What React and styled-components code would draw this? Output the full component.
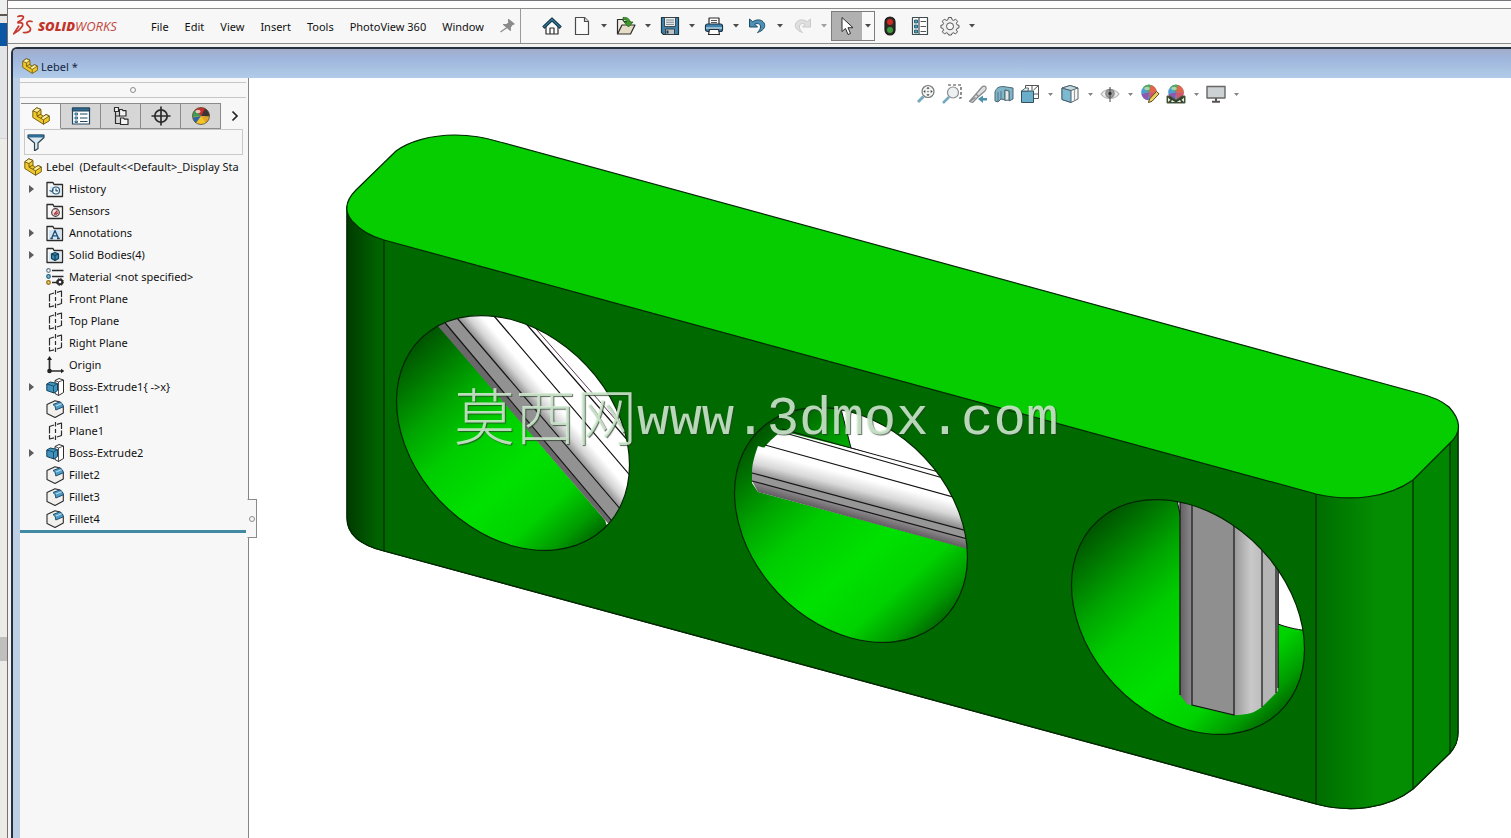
import React from "react";
import styled, { createGlobalStyle } from "styled-components";

const GlobalStyle = createGlobalStyle`
  *, *::before, *::after { box-sizing: border-box; }
  html, body { margin: 0; padding: 0; background: #fff; }
  body, button, input { font-family: "Noto Sans", "Open Sans", sans-serif; font-size: 11px; color: #111; }
  button { border: 0; padding: 0; margin: 0; background: none; }
  svg { display: block; }
`;

/* ---------- frame ---------- */
const Desktop = styled.div`
  display: grid;
  grid-template-columns: 7px minmax(0, 1fr);
  min-height: 100vh;
`;
const Behind = styled.div`
  background: linear-gradient(
    #eef0f0 0 14px, #5c5653 14px 16px, #e6e6e6 16px 23px, #0a56a4 23px 46px,
    #e2e4e6 46px 138px, #d4d4d2 138px 139px, #ebebe7 139px 637px, #bfbfbd 637px 661px, #ebebe7 661px
  );
`;
const AppWindow = styled.div`
  display: flex;
  flex-direction: column;
  min-width: 0;
  border-left: 1px solid #77706e;
  border-top: 1px solid #77757a;
  background: #f3f3f2;
`;
const TitleStrip = styled.div`
  height: 7px;
  background: #fdfdfd;
`;
const MenuBar = styled.header`
  display: flex;
  align-items: center;
  height: 36px;
  border-top: 1px solid #8b8b8b;
  border-bottom: 1px solid #8b8b8b;
  background: #f7f7f7;
`;
const Brand = styled.div`
  display: flex;
  align-items: center;
  gap: 4px;
  width: 127px;
  padding-left: 5px;
`;
const BrandName = styled.span`
  font-family: "Open Sans", sans-serif;
  font-size: 13px;
  font-style: italic;
  line-height: 16px;
  color: #c4463c;
  b { font-weight: 800; color: #c2332a; }
`;
const Menus = styled.nav`
  display: flex;
  align-items: center;
  gap: 16px;
  padding: 2px 0 0 16px;
`;
const MenuButton = styled.button`
  line-height: 20px;
  white-space: nowrap;
`;
const Pin = styled.button`
  display: grid;
  place-items: center;
  width: 37px;
  height: 34px;
  padding-left: 11px;
  border-right: 1px solid #9a9a9a;
`;
const Toolbar = styled.div`
  display: flex;
  align-items: center;
  padding-left: 19px;
`;
const Tool = styled.button`
  display: grid;
  place-items: center;
  width: 24px;
  height: 24px;
  margin-right: ${(p) => (p.$alone ? "6px" : "0")};
  opacity: ${(p) => (p.$dim ? 0.5 : 1)};
`;
const CaretButton = styled.button`
  display: grid;
  place-items: center;
  width: ${(p) => p.$w || 20}px;
  height: ${(p) => p.$h || 20}px;
  opacity: ${(p) => (p.$dim ? 0.5 : 1)};
`;
const SelectGroup = styled.div`
  display: flex;
  height: 30px;
  margin: 0 3px 0 -3px;
  border: 1px solid #7d7d7d;
  background: #f9f9f9;
`;
const SelectTool = styled.button`
  display: grid;
  place-items: center;
  width: 30px;
  background: #b1b1b1;
`;
const DocFrame = styled.section`
  display: flex;
  flex-direction: column;
  flex: 1;
  margin: 3px 0 0 3px;
  border: 2px solid #26303f;
  border-right: 0;
  border-bottom: 0;
  border-top-left-radius: 6px;
  background: #bccfe5;
  overflow: hidden;
`;
const DocTitle = styled.div`
  display: flex;
  align-items: center;
  gap: 3px;
  height: 29px;
  padding: 5px 0 0 9px;
  background: linear-gradient(#a3acc8, #9fb5db 30%, #b0cce9);
  color: #14243f;
`;
const DocBody = styled.div`
  display: grid;
  grid-template-columns: 229px minmax(0, 1fr);
  flex: 1;
  margin-left: 7px;
`;

/* ---------- feature panel ---------- */
const Panel = styled.aside`
  position: relative;
  border-right: 1px solid #858585;
  background: #f7f7f7;
`;
const Grip = styled.div`
  display: grid;
  place-items: center;
  height: 16px;
  margin: 4px 2px 5px 0;
  border-top: 1px solid #c6c6c6;
  border-bottom: 1px solid #c6c6c6;
`;
const Dot = styled.i`
  width: 6px;
  height: 6px;
  border: 1px solid #8c8c8c;
  border-radius: 50%;
`;
const Tabs = styled.div`
  display: flex;
  height: 26px;
  padding-left: 1px;
`;
const Tab = styled.button`
  display: grid;
  place-items: center;
  flex: none;
  width: 40px;
  height: 26px;
  border: 1px solid #8b8b8b;
  border-left-width: 0;
  border-bottom-color: ${(p) => (p.$active ? "#f7f7f7" : "#8b8b8b")};
  background: ${(p) => (p.$active ? "#f9f9f9" : "#d6d6d6")};
`;
const MoreTabs = styled.button`
  display: grid;
  place-items: center;
  flex: 1;
`;
const FilterBox = styled.label`
  display: flex;
  align-items: center;
  height: 26px;
  margin: 0 5px 0 4px;
  padding-left: 2px;
  border: 1px solid #c9c9c9;
`;
const FilterInput = styled.input`
  flex: 1;
  min-width: 0;
  border: 0;
  outline: 0;
  background: transparent;
`;
const Tree = styled.ul`
  list-style: none;
  margin: 1px 2px 0 0;
  padding: 0;
  border-bottom: 3px solid #4289a3;
`;
const TreeRow = styled.li`
  display: flex;
  align-items: center;
  height: 22px;
  padding-left: ${(p) => (p.$root ? 4 : 6)}px;
  line-height: 20px;
  white-space: pre;
  overflow: hidden;
`;
const Expander = styled.span`
  display: block;
  width: 20px;
`;
const NodeIcon = styled.span`
  width: ${(p) => (p.$root ? 22 : 23)}px;
  flex: none;
`;
const PanelHandle = styled.button`
  position: absolute;
  z-index: 2;
  left: 227px;
  top: 421px;
  display: grid;
  place-items: center;
  width: 10px;
  height: 39px;
  border: 1px solid #8b8b8b;
  border-left-color: #f7f7f7;
  background: #f7f7f7;
`;

/* ---------- graphics area ---------- */
const Viewport = styled.main`
  position: relative;
  background: #fff;
  overflow: hidden;
`;
const Scene = styled.svg`
  width: 100%;
  height: auto;
`;
const ViewTools = styled.div`
  position: absolute;
  top: 4px;
  left: 664px;
  display: flex;
  align-items: center;
`;
const ViewTool = styled.button`
  display: grid;
  place-items: center;
  width: 26px;
  height: 24px;
`;
const Watermark = styled.div`
  position: absolute;
  left: 205px;
  top: 296px;
  display: flex;
  align-items: flex-start;
  white-space: nowrap;
  color: rgba(214, 240, 214, 0.85);
  text-shadow: 1px 1px 1px rgba(40, 60, 40, 0.75);
`;
const Hanzi = styled.span`
  font-family: "Noto Sans CJK SC", sans-serif;
  font-size: 61px;
  font-weight: 300;
  line-height: 80px;
`;
const Domain = styled.span`
  font-family: "Liberation Mono", monospace;
  font-size: 54px;
  line-height: 92px;
`;

/* ---------- icons ---------- */
const Svg = ({ w = 20, h, children }) => (
  <svg width={w} height={h || w} viewBox={`0 0 ${w} ${h || w}`} fill="none" stroke="#2c2c2c" strokeWidth="1.2" strokeLinejoin="round" aria-hidden="true">
    {children}
  </svg>
);
const Caret = () => (
  <svg width="6" height="4" viewBox="0 0 6 4" aria-hidden="true"><path d="M0 0h6L3 3.6z" fill="#4b4b4b" /></svg>
);
const CaretSmall = () => (
  <svg width="5" height="3" viewBox="0 0 5 3" aria-hidden="true"><path d="M0 0h5L2.5 3z" fill="#858585" /></svg>
);
const PartIcon = ({ size = 18 }) => (
  <svg width={size} height={size} viewBox="0 0 18 18" stroke="#6b540c" strokeWidth=".9" strokeLinejoin="round" aria-hidden="true">
    <path d="M.8 3.800 4.800.8 9 2.500v5.300l2.500 1.500L14 7.500l3.300 1.500v4.800L11.500 17.300.8 10.500z" fill="#f0c827" />
    <path d="M.8 3.800 4.800.8 9 2.500 5 5.500zM8.500 11.200 14 7.500l3.300 1.500-5.800 3.800z" fill="#fff0a0" />
    <path d="M5 5.500v3.800l3.500 1.900M11.500 12.800v4.500M5 9.300 9 7" fill="none" />
  </svg>
);
const HomeIcon = () => (
  <Svg>
    <path d="M4 9v9h12V9l-6-5z" fill="#fff" />
    <path d="M8 18v-6h4v6" />
    <path d="M1 10.500 10 2l9 8.500-1.500 1.500L10 5l-7.500 7z" fill="#3b86a8" stroke="#173f52" />
  </Svg>
);
const NewIcon = () => (
  <Svg><path d="M3.500 1.500h9l4 4v13h-13z" fill="#fafafa" stroke="#4a4a4a" /><path d="M12.500 1.500v4h4" fill="#ddd" stroke="#4a4a4a" /></Svg>
);
const OpenIcon = () => (
  <Svg>
    <path d="M1.500 18V3.500h5l1.500 2h6V9" fill="#f0ece2" />
    <path d="M1.500 18 6 9h13l-4.500 9z" fill="#e5ddc6" />
    <path d="M7 1.500c4-.5 6.500 1 7 4.500h3l-4.500 5L8 6h3c-.500-1.800-2-2.500-4-2.500z" fill="#3f9a2b" stroke="#24641a" strokeWidth=".8" />
  </Svg>
);
const SaveIcon = () => (
  <Svg>
    <path d="M1.500 1.500h17v17H3.500l-2-2z" fill="#3e83ad" stroke="#1d3644" />
    <path d="M4.500 1.500h11v9h-11z" fill="#e9eef1" strokeWidth=".8" />
    <path d="M6 4h8M6 6.200h8M6 8.400h8" strokeWidth=".8" stroke="#5c6a72" />
    <path d="M5.500 13h9v5.500h-9z" fill="#b8c4ca" strokeWidth=".8" /><path d="M7.500 14.500v3" strokeWidth="2" />
  </Svg>
);
const PrintIcon = () => (
  <Svg>
    <path d="M5 8V2h10v6" fill="#fff" /><path d="M7 4.500h6M7 6.500h6" strokeWidth=".8" />
    <rect x="1.500" y="8" width="17" height="7.500" rx="2" fill="#3e83ad" stroke="#1d3644" />
    <path d="M2 12h16" stroke="#cfe4ef" />
    <path d="M5.500 13.500h9l1 5h-11z" fill="#fff" />
  </Svg>
);
const UndoIcon = () => (
  <Svg><path d="M1.500 3v8h8L6.800 8.300c3.500-2 6.700.2 5.500 4-.3 1.200-1.300 2.700-2.800 4.200 5.500-1.800 8-5 7-8.300-1-4-6.500-6-11.800-2.500z" fill="#4a91b8" stroke="#1f4a62" strokeWidth="1" /></Svg>
);
const RedoIcon = () => (
  <Svg><path d="M18.500 3v8h-8l2.700-2.700c-3.500-2-6.700.2-5.500 4 .3 1.200 1.300 2.700 2.800 4.200-5.500-1.800-8-5-7-8.300 1-4 6.500-6 11.800-2.500z" fill="#c9c9c9" stroke="#9c9c9c" strokeWidth="1" /></Svg>
);
const ArrowIcon = () => (
  <Svg><path d="M5 1.500v14l3.500-3 2.500 6 2.500-1-2.500-5.800h5z" fill="#fff" strokeWidth="1" /></Svg>
);
const TrafficIcon = () => (
  <Svg>
    <rect x="5" y="1" width="10" height="18" rx="5" fill="#2d2a26" stroke="#1c1c1c" />
    <circle cx="10" cy="6" r="3" fill="#cf2a24" stroke="none" /><circle cx="10" cy="14" r="3" fill="#3c9d3c" stroke="none" />
  </Svg>
);
const OptionsIcon = () => (
  <Svg>
    <path d="M2.500 1.500h15v17h-15zM9 1.500v17" fill="#fff" stroke="#3c4c52" />
    <g fill="#4aa0b8" stroke="#1d4f5e" strokeWidth=".8"><path d="M4.500 4h3v3h-3zM4.500 9h3v3h-3zM4.500 14h3v3h-3z" /></g>
    <path d="M10.500 5.500h5.500M10.500 10.500h5.500M10.500 15.500h5.500" stroke="#555" />
  </Svg>
);
const GearIcon = () => (
  <Svg>
    <path d="M8.500 1.500h3l.5 2.200 1.600.7 2-1.200 2 2.100-1.200 2 .7 1.600 1.900.4v2.500l-2 .6-.6 1.500 1.100 2-2 2-2-1.100-1.600.7-.5 1.500h-2.900l-.5-1.500-1.600-.7-2 1.100-2-2 1.100-2-.6-1.500-2-.6V9.300l1.900-.4.700-1.600-1.200-2 2-2.100 2 1.200L8 3.700z" fill="#efefef" stroke="#555" strokeWidth="1" />
    <circle cx="10" cy="10.300" r="3.500" fill="#fafafa" stroke="#555" strokeWidth="1" />
  </Svg>
);
const PinIcon = () => (
  <Svg w={16}><path d="M9.500 1.500 15 6l-2 .8-1.800 2.500.2 3-6.800-5.800 3 .1 2.300-2zM8 9.500 1.500 14" fill="#8b8b8b" stroke="#8b8b8b" /></Svg>
);
const LogoIcon = () => (
  <svg width="21" height="22" viewBox="0 0 21 22" fill="none" stroke="#c7382e" strokeWidth="1.700" strokeLinecap="round" aria-hidden="true">
    <path d="M5 1.500C8 .2 11 .8 10.300 2.800 9.700 4.500 7 6.200 5 7" />
    <path d="M5 7.800C9.500 7 10.800 8.700 8.700 12 7 14.600 4 17 1 18.500c1.700-3 3.200-5 4.700-7.300" />
    <path d="M19 6.500c-3.500-.8-5.500 0-5.200 2 .3 2.200 4.200 3.500 3.700 6-.4 2.200-3.500 3.200-7 3" />
  </svg>
);

const PropertyIcon = () => (
  <Svg>
    <path d="M1.500 2h17v16h-17z" fill="#fff" stroke="#25465c" /><path d="M1.500 2h17v3h-17z" fill="#2f6b92" stroke="#25465c" />
    <g stroke="#285d80" fill="#9ecbe5" strokeWidth=".9"><path d="M4 7h2.500v2H4zM4 11h2.500v2H4zM4 15h2.500v1.500H4z" /></g>
    <path d="M9 8h7.500M9 12h7.500M9 15.500h7.500" stroke="#25465c" />
  </Svg>
);
const ConfigIcon = () => (
  <Svg>
    <path d="M4.500 5v12.500H9M4.500 10H9" />
    <path d="M3.500 1.500h4v4h-4z" fill="#f4f4f4" />
    <path d="M8.500 3.500h2.500l1 1.200h3V10H8.500zM9.500 12h3l1 1.200h3.500v5.300H9.500z" fill="#f4f4f4" />
  </Svg>
);
const TargetIcon = () => (
  <Svg><circle cx="10" cy="10" r="6.200" strokeWidth="1.700" /><path d="M10 0.500v19M.5 10h19" strokeWidth="1.700" /></Svg>
);
const BallIcon = () => (
  <Svg>
    <circle cx="10" cy="10" r="8.500" fill="#f0c525" stroke="none" />
    <path d="M10 10 1.500 11A8.500 8.500 0 0 1 8 1.800z" fill="#3f9b55" stroke="none" />
    <path d="M10 10 4 4a8.500 8.500 0 0 1 12-.1z" fill="#c9302c" stroke="none" />
    <path d="M10 10 14 2.500a8.500 8.500 0 0 1 4.500 8z" fill="#3a3436" stroke="none" />
    <path d="M10 10 18.400 11.500A8.500 8.500 0 0 1 15 17z" fill="#e0a32a" stroke="none" />
    <path d="M10 10 1.600 11.500A8.500 8.500 0 0 0 5 17z" fill="#2c66ad" stroke="none" />
    <circle cx="10" cy="10" r="8.500" stroke="#5a4a3a" strokeWidth=".8" />
    <ellipse cx="7" cy="5.500" rx="2.500" ry="1.800" fill="#fff" opacity=".7" stroke="none" />
  </Svg>
);
const FunnelIcon = () => (
  <Svg w={18}>
    <path d="M1 2h16v2.500L11 10v5.500L7.500 18v-8L1 4.500z" fill="#dce8ef" stroke="#2b4353" />
    <path d="M1.500 2h15v2h-15z" fill="#2f7fae" stroke="#235573" strokeWidth=".8" />
  </Svg>
);

const folderBase = <path d="M1 16.500V2.500h6l1 2h8.500v12z" fill="#f8f8f8" strokeWidth="1.300" />;
const treeIcons = {
  history: (
    <Svg w={18}>{folderBase}<path d="M4 6.500h11v8H4z" fill="#d7e9f5" stroke="none" /><circle cx="10" cy="10.500" r="3.500" stroke="#2b5878" fill="#f4fafd" /><path d="M10 8.500v2.300h2M3.500 10.500l2.500 1 1.500-2" stroke="#2b5878" /></Svg>
  ),
  sensors: (
    <Svg w={18}>{folderBase}<circle cx="9.500" cy="10.500" r="3.800" fill="#f6dede" stroke="#493a3c" /><path d="M8 12.500 11.500 8.500M9.500 12.800l2.500-2" stroke="#a8323a" /></Svg>
  ),
  annotations: (
    <Svg w={18}>{folderBase}<path d="M3 6h12v9H3z" fill="#cfe5f3" stroke="none" /><path d="M5.500 14.500 9 6.500l3.500 8M6.800 11.800h4.400M4.300 14.500h2.600M11 14.500h2.800" stroke="#234e72" strokeWidth="1.300" /></Svg>
  ),
  bodies: (
    <Svg w={18}>{folderBase}<path d="M3 6h12v9H3z" fill="#d7e9f5" stroke="none" /><path d="m5.500 8 3.500-1.500L12.500 8v4.500L9 14.500l-3.500-2z" fill="#3b8ab5" stroke="#143e57" /><path d="M5.500 8 9 9.500 12.500 8M9 9.500v5" stroke="#143e57" /></Svg>
  ),
  material: (
    <Svg w={18}>
      <path d="M6 2.500h11.500M6 8.500h11.500M6 14.500h5" strokeWidth="1.700" />
      <circle cx="2.500" cy="2.500" r="1.800" fill="#fff" stroke="#6a7c88" /><circle cx="2.500" cy="8.500" r="1.800" fill="#7ec2e4" stroke="#275f80" /><circle cx="2.500" cy="14.500" r="1.800" fill="#f2d267" stroke="#8d6b12" />
      <circle cx="14" cy="14" r="2.300" strokeWidth="2" fill="#fff" /><circle cx="14" cy="14" r="3.500" strokeWidth="1" strokeDasharray="1.400 1.350" />
    </Svg>
  ),
  plane: (
    <Svg w={18}><path d="M3.500 11.500V4.500L8 3M11 2.300l4.500-1.300v6M15.500 8.500v5L11 15M8 15.800l-4.500 1.200V13" /><path d="M9.500 0v4.500M9.500 7v4M9.500 13.500V18" /></Svg>
  ),
  origin: (
    <Svg w={18}><path d="M3.500 3v12H16" strokeWidth="1.700" /><path d="M3.500 0 6 4H1zM18.500 15 15 12.800v4.400z" fill="#222" stroke="none" /><circle cx="3.500" cy="15" r="2.300" fill="#222" stroke="none" /></Svg>
  ),
  extrude: (
    <Svg w={18}>
      <path d="m9 2.500 4-2 4.500 1.500v12.500l-5 3-3.500-2z" fill="#fff" strokeWidth="1" /><path d="m9 2.500 3.500 1.500v13.500M12.500 4l5-2" strokeWidth=".8" />
      <path d="m.8 6 3.500-2 7.200 1.500v7L8 15l-7.200-2.500z" fill="#3f93bd" stroke="#12415a" strokeWidth="1" /><path d="m.8 6 6.700 2 4-2.500M7.500 8v7" stroke="#12415a" strokeWidth=".8" />
    </Svg>
  ),
  fillet: (
    <Svg w={18}>
      <path d="M1 4.500 9 .8l5 1.200 3.300 4.500V13L9 17.500l-8-4z" fill="#f3f1ee" strokeWidth="1.100" />
      <path d="M7 4.500 13.500 2c2.300.6 3.600 2.300 3.800 4.800L9.800 10C9.600 7.200 8.800 5.500 7 4.500z" fill="#4f9dc8" stroke="#1d4f6c" strokeWidth="1" />
      <path d="m10 6 5.500-2.300" stroke="#b9dbed" />
    </Svg>
  ),
};

/* view toolbar icons */
const ZoomFit = () => (
  <Svg><path d="m7.500 12.500-5.500 5.500" stroke="#75a9bd" strokeWidth="3" /><circle cx="12" cy="7.500" r="6" fill="#f1f3f3" stroke="#74797b" /><path d="m12 2.800 1.500 2h-3zM12 12.200l1.500-2h-3zM7.300 7.500l2-1.500v3zM16.700 7.500l-2-1.500v3z" fill="#444" stroke="none" /><circle cx="12" cy="7.500" r=".8" fill="#666" stroke="none" /></Svg>
);
const ZoomArea = () => (
  <Svg><path d="M6 1h13v13h-4" stroke="#444" strokeDasharray="3 2" /><path d="m7 13-6 6" stroke="#75a9bd" strokeWidth="2.500" /><circle cx="11" cy="8.500" r="5.500" fill="#eef1f2" stroke="#888c8e" /></Svg>
);
const PrevView = () => (
  <Svg>
    <path d="M1.500 17.500 8 10l6-7c1.500-1.500 3.500-1 4 .3.600 1.400.2 2.700-1 3.700l-6.500 5.500-6 6z" fill="#dcdedf" stroke="#868a8c" />
    <path d="m8 10 2.500 2.500M1.500 17.500l6-4" stroke="#868a8c" /><path d="m10 15 5-3.500V14h4v2.500h-4V19z" fill="#4c91ab" stroke="none" />
  </Svg>
);
const SectionIcon = () => (
  <Svg><path d="M1 8c1-4 4-5.500 8-5.500L19 4v11l-4 2V7l-4-1v10l-4-1-3 3-3-1z" fill="#7fb4c9" stroke="#4c6873" strokeWidth="1" /><path d="m11 6 4 1v9l-4 .500z" fill="#e4e8ea" stroke="#4c6873" strokeWidth="1" /><path d="M4 8v9M7 7v8" stroke="#4c6873" strokeWidth=".8" /></Svg>
);
const OrientIcon = () => (
  <Svg><path d="M5.500 5.500V1.500h13v13H14M13.500 6l5-4.500M12 1.500v5M14 10h4.500" stroke="#555" strokeWidth="1" /><path d="M1.500 7h12v11.500h-12z" fill="#6aaec9" stroke="#35505c" strokeWidth="1" /><path d="m1.500 7 4-3h3L8 7z" fill="#e4eef2" stroke="#35505c" strokeWidth=".8" /></Svg>
);
const CubeIcon = () => (
  <Svg><path d="m2 4 8-2.500L18 4v11l-7 3.500-9-3z" fill="#fbfbfb" stroke="#55646b" strokeWidth="1" /><path d="m2 4 9 2.500v12l-9-3z" fill="#7dbad2" stroke="#44606c" strokeWidth="1" /><path d="m2 4 8-2.500L18 4l-7 2.500z" fill="#c0d9e3" stroke="#55646b" strokeWidth="1" /><path d="M14.500 5.500v11" stroke="#999" /></Svg>
);
const EyeIcon = () => (
  <Svg><path d="M1 10c4-6 14-6 18 0-4 6-14 6-18 0z" fill="#ececec" stroke="#b4b4b4" /><circle cx="10" cy="9.500" r="4.200" fill="#9d9d9d" stroke="#888" /><path d="M10 3v15" stroke="#444" strokeWidth="1" /><circle cx="10" cy="9.500" r="1.700" fill="#333" stroke="none" /></Svg>
);
const Quarters = () => (
  <g stroke="none">
    <circle cx="9" cy="8.500" r="7.800" fill="#4e9fd0" /><path d="M9 8.500 3 3.500A7.800 7.800 0 0 1 12 1.300z" fill="#56a760" />
    <path d="M9 8.500 11 1a7.800 7.800 0 0 1 5.800 8z" fill="#e5654b" /><path d="M9 8.500 1.500 10A7.800 7.800 0 0 0 8 16.200z" fill="#8d58ad" /><path d="m9 8.500 7.800.5a7.800 7.800 0 0 1-7 7.200z" fill="#d8566a" />
    <ellipse cx="7" cy="4.500" rx="2.800" ry="1.700" fill="#fff" opacity=".5" />
  </g>
);
const AppearIcon = () => (
  <Svg><Quarters /><path d="m8.500 18.500 1-3.500 7-7.500 2.500 2.300-7 7.500z" fill="#f1d35c" stroke="#50482a" strokeWidth="1" /></Svg>
);
const SceneIcon = () => (
  <Svg><g transform="translate(1 0)"><Quarters /></g><path d="M1 12h3l6 4 6-4h3v7H1z" fill="#33402c" stroke="#4a5b40" strokeWidth="1" /><path d="M2 13.500 4.500 16 2 18zM18 13.500 15.500 16l2.500 2zM6 16l3 2H5zM14 16l-3 2h4z" fill="#e6efdd" stroke="none" /></Svg>
);
const MonitorIcon = () => (
  <Svg><path d="M1 2.500h18v11.500H1z" fill="#ccd2d4" stroke="#666" strokeWidth="1.400" /><path d="M10 14v3.500M6 17.700h8" stroke="#555" strokeWidth="2" /></Svg>
);

/* ---------- model ---------- */
const TOP_FACE =
  "M384 240 1316 494C1350 502 1388 498 1413 480L1450 443C1462 432 1461 420 1449 407 1441 400 1430 396 1418 393L500 142C484 137 470 135 455 135 430 135 408 142 396 151L356 190C346 200 343 210 352 221 360 230 369 236 384 240Z";
const SILHOUETTE =
  "M347 207V518C347 534 360 545 384 551L1316 804C1350 813 1388 809 1413 789L1450 753C1456 746 1458 741 1458 733V427L1300 380 500 250Z";
const HOLES = [
  { id: "a", cx: 513, cy: 433 },
  { id: "b", cx: 851, cy: 525 },
  { id: "c", cx: 1188, cy: 617 },
];
const holeMatrix = (h) => `matrix(116.500 32 0 113 ${h.cx} ${h.cy})`;

function Model() {
  return (
    <Scene viewBox="249 78 1262 760" role="img" aria-label="Level body, isometric view">
      <defs>
        <linearGradient id="leftFillet"><stop offset="0" stopColor="#003a00" /><stop offset=".7" stopColor="#005c00" /><stop offset="1" stopColor="#006600" /></linearGradient>
        <linearGradient id="rightFillet"><stop offset="0" stopColor="#006c00" /><stop offset=".25" stopColor="#007a00" /><stop offset=".6" stopColor="#048c02" /><stop offset="1" stopColor="#048d02" /></linearGradient>
        {HOLES.map((h) => (
          <React.Fragment key={h.id}>
            <clipPath id={`clip-${h.id}`}><circle r="1" transform={holeMatrix(h)} /></clipPath>
            <linearGradient id={`bore-${h.id}`} gradientUnits="userSpaceOnUse" x1={h.cx - 88} y1={h.cy - 98} x2={h.cx + 88} y2={h.cy + 98}>
              <stop offset="0" stopColor="#005400" /><stop offset=".1" stopColor="#007400" /><stop offset=".25" stopColor="#00a600" /><stop offset=".4" stopColor="#00cc00" />
              <stop offset=".62" stopColor="#00e100" /><stop offset=".8" stopColor="#00d200" /><stop offset=".93" stopColor="#009a00" /><stop offset="1" stopColor="#006c00" />
            </linearGradient>
          </React.Fragment>
        ))}
        <linearGradient id="tubeA" gradientUnits="userSpaceOnUse" x1="538" y1="413" x2="558" y2="396"><stop offset="0" stopColor="#8e8e8e" /><stop offset=".35" stopColor="#d5d5d5" /><stop offset=".75" stopColor="#fff" /></linearGradient>
        <linearGradient id="tubeB" gradientUnits="userSpaceOnUse" x1="860" y1="502" x2="867" y2="475"><stop offset="0" stopColor="#8e8e8e" /><stop offset=".4" stopColor="#d8d8d8" /><stop offset=".85" stopColor="#fff" /></linearGradient>
        <linearGradient id="underB" gradientUnits="userSpaceOnUse" x1="860" y1="510" x2="857" y2="521"><stop offset="0" stopColor="#8e8a8e" /><stop offset="1" stopColor="#575357" /></linearGradient>
        <linearGradient id="tubeC"><stop offset="0" stopColor="#989898" /><stop offset=".6" stopColor="#c9c9c9" /><stop offset="1" stopColor="#bcbcbc" /></linearGradient>
        <linearGradient id="edgeC"><stop offset="0" stopColor="#625e62" /><stop offset="1" stopColor="#8c8a8c" /></linearGradient>
        <clipPath id="bodyClip"><path d={SILHOUETTE} /></clipPath>
      </defs>

      <g stroke="#002800" strokeWidth="1.200">
        <path d={SILHOUETTE} fill="#006a00" />
        <g clipPath="url(#bodyClip)" stroke="none">
          <path d="M347 200h37v360h-37z" fill="url(#leftFillet)" />
          <path d="M1316 450h97v370h-97z" fill="url(#rightFillet)" />
          <path d="M1413 420h37v390h-37z" fill="#008600" />
          <path d="M1450 400h9v390h-9z" fill="#007000" />
        </g>
        <path d="M384 240V551M1316 494V804M1413 480V789M1450 443V753" />
        <path d={SILHOUETTE} fill="none" />
        <path d={TOP_FACE} fill="#06cd00" />
      </g>

      <g clipPath="url(#clip-a)">
        <path d="M380 300h260v260H380z" fill="url(#bore-a)" />
        <path d="M432 318 605 520 618 560H700V250H432z" fill="#fff" />
        <path d="M431 318 605 520 625 543V537L441 318z" fill="#6b686b" />
        <path d="M441 318 622 533 645 539 457 318z" fill="#929292" />
        <path d="M457 318 645 538 672 521 484 301z" fill="url(#tubeA)" />
        <path d="m441 318 181 215M457 318l182 213M494 316l140 164M522 319l108 124" stroke="#141414" strokeWidth="1.200" />
        <path d="m530 322 100 114" stroke="#5b3957" />
      </g>

      <g clipPath="url(#clip-b)">
        <path d="M720 400h260v260H720z" fill="url(#bore-b)" />
        <path d="m840 405 11 43 100 30V390z" fill="#fff" stroke="#111" />
        <path d="M782 431C763 444 752 462 752 483l6 9 212 57V480L937 470z" fill="#fff" stroke="none" />
        <path d="M752 473C752 463 755 455 758 446L972 505v28z" fill="url(#tubeB)" />
        <path d="M752 473 975 533v8L752 481z" fill="#969696" />
        <path d="M752 481 975 541v10L758 492z" fill="url(#underB)" />
        <path d="m752 473 223 60M752 481l223 60M765 445l195 54M778 431l165 47" stroke="#141414" strokeWidth="1.200" />
        <path d="m782 429 69 19 95 26" stroke="#141414" fill="none" />
      </g>

      <g clipPath="url(#clip-c)">
        <path d="M1060 490h260v260h-260z" fill="url(#bore-c)" />
        <path d="M1176 495l5 24v-24z" fill="#fff" stroke="#111" />
        <path d="M1278 540v84c8 3 16 5 30 7v-90z" fill="#fff" stroke="#111" />
        <path d="M1180 495h12v210l-5-1-7-9z" fill="url(#edgeC)" />
        <path d="M1192 495h42v220l-42-10z" fill="#8f8f8f" />
        <path d="M1234 495h28v212c-8 6-14 8-28 8z" fill="url(#tubeC)" />
        <path d="M1262 495h16v196l-16 16z" fill="#b5b5b5" />
        <path d="M1180 495v200M1192 495v210l42 10V495M1262 520v187M1276 545v148M1278 545v143" stroke="#141414" strokeWidth="1.200" fill="none" />
      </g>

      {HOLES.map((h) => (
        <circle key={h.id} r="1" transform={holeMatrix(h)} fill="none" stroke="#012401" strokeWidth="1.200" vectorEffect="non-scaling-stroke" />
      ))}
    </Scene>
  );
}

/* ---------- data ---------- */
const menus = ["File", "Edit", "View", "Insert", "Tools", "PhotoView 360", "Window"];
const fileTools = [
  ["New", NewIcon], ["Open", OpenIcon], ["Save", SaveIcon], ["Print", PrintIcon], ["Undo", UndoIcon], ["Redo", RedoIcon, true],
];
const tabs = [
  ["Feature tree", () => <PartIcon size={18} />], ["Properties", PropertyIcon], ["Configurations", ConfigIcon], ["Dimensions", TargetIcon], ["Display", BallIcon],
];
const nodes = [
  ["History", "history", true], ["Sensors", "sensors"], ["Annotations", "annotations", true], ["Solid Bodies(4)", "bodies", true],
  ["Material <not specified>", "material"], ["Front Plane", "plane"], ["Top Plane", "plane"], ["Right Plane", "plane"], ["Origin", "origin"],
  ["Boss-Extrude1{ ->x}", "extrude", true], ["Fillet1", "fillet"], ["Plane1", "plane"], ["Boss-Extrude2", "extrude", true],
  ["Fillet2", "fillet"], ["Fillet3", "fillet"], ["Fillet4", "fillet"],
];
const viewTools = [
  ["Zoom to fit", ZoomFit], ["Zoom to area", ZoomArea], ["Previous view", PrevView], ["Section view", SectionIcon],
  ["View orientation", OrientIcon, true], ["Display style", CubeIcon, true], ["Hide or show items", EyeIcon, true],
  ["Edit appearance", AppearIcon], ["Apply scene", SceneIcon, true], ["View settings", MonitorIcon, true],
];

export default function App() {
  return (
    <Desktop>
      <GlobalStyle />
      <Behind />
      <AppWindow>
        <TitleStrip />
        <MenuBar>
          <Brand><LogoIcon /><BrandName><b>SOLID</b>WORKS</BrandName></Brand>
          <Menus>{menus.map((m) => <MenuButton key={m}>{m}</MenuButton>)}</Menus>
          <Pin aria-label="Keep menu open"><PinIcon /></Pin>
          <Toolbar>
            <Tool $alone aria-label="Home"><HomeIcon /></Tool>
            {fileTools.map(([name, Icon, dim]) => (
              <React.Fragment key={name}>
                <Tool aria-label={name} $dim={dim}><Icon /></Tool>
                <CaretButton aria-label={`${name} options`} $dim={dim}><Caret /></CaretButton>
              </React.Fragment>
            ))}
            <SelectGroup>
              <SelectTool aria-label="Select"><ArrowIcon /></SelectTool>
              <CaretButton $w={12} $h={28} aria-label="Select options"><Caret /></CaretButton>
            </SelectGroup>
            <Tool $alone aria-label="Rebuild"><TrafficIcon /></Tool>
            <Tool $alone aria-label="File properties"><OptionsIcon /></Tool>
            <Tool aria-label="Settings"><GearIcon /></Tool>
            <CaretButton aria-label="Settings options"><Caret /></CaretButton>
          </Toolbar>
        </MenuBar>
        <DocFrame>
          <DocTitle><PartIcon size={16} />Lebel *</DocTitle>
          <DocBody>
            <Panel>
              <Grip><Dot /></Grip>
              <Tabs role="tablist">
                {tabs.map(([name, Icon], i) => (
                  <Tab key={name} role="tab" aria-label={name} aria-selected={i === 0} $active={i === 0}><Icon /></Tab>
                ))}
                <MoreTabs aria-label="More tabs">
                  <svg width="8" height="12" viewBox="0 0 8 12" fill="none" stroke="#222" strokeWidth="1.700" aria-hidden="true"><path d="m1.500 1.500 4.500 4.500-4.500 4.500" /></svg>
                </MoreTabs>
              </Tabs>
              <FilterBox><FunnelIcon /><FilterInput aria-label="Filter the tree" /></FilterBox>
              <Tree>
                <TreeRow $root><NodeIcon $root><PartIcon size={18} /></NodeIcon>{"Lebel  (Default<<Default>_Display Sta"}</TreeRow>
                {nodes.map(([name, icon, open]) => (
                  <TreeRow key={name}>
                    <Expander>
                      {open && <svg width="11" height="8" viewBox="0 0 11 8" aria-hidden="true"><path d="M3 0v8l5-4z" fill="#5d5d5d" /></svg>}
                    </Expander>
                    <NodeIcon>{treeIcons[icon]}</NodeIcon>
                    {name}
                  </TreeRow>
                ))}
              </Tree>
              <PanelHandle aria-label="Collapse panel"><Dot /></PanelHandle>
            </Panel>
            <Viewport>
              <Model />
              <ViewTools>
                {viewTools.map(([name, Icon, more]) => (
                  <React.Fragment key={name}>
                    <ViewTool aria-label={name}><Icon /></ViewTool>
                    {more && <CaretButton $w={14} aria-label={`${name} options`}><CaretSmall /></CaretButton>}
                  </React.Fragment>
                ))}
              </ViewTools>
              <Watermark><Hanzi lang="zh">莫西网</Hanzi><Domain>www.3dmox.com</Domain></Watermark>
            </Viewport>
          </DocBody>
        </DocFrame>
      </AppWindow>
    </Desktop>
  );
}
